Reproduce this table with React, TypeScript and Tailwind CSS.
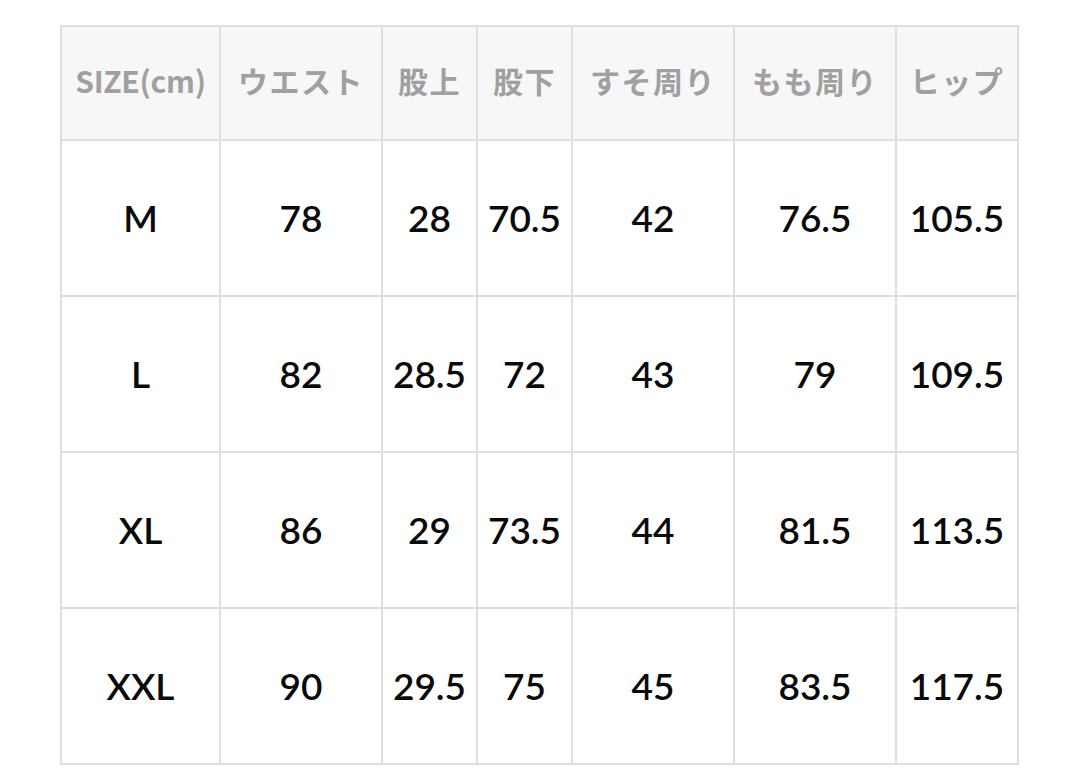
const headers = ["SIZE(cm)", "ウエスト", "股上", "股下", "すそ周り", "もも周り", "ヒップ"];

const rows = [
  ["M", "78", "28", "70.5", "42", "76.5", "105.5"],
  ["L", "82", "28.5", "72", "43", "79", "109.5"],
  ["XL", "86", "29", "73.5", "44", "81.5", "113.5"],
  ["XXL", "90", "29.5", "75", "45", "83.5", "117.5"],
];

const widths = ["w-[159px]", "w-[162px]", "w-[95px]", "w-[95px]", "w-[162px]", "w-[162px]", "w-[122px]"];

export default function App() {
  return (
    <div className="w-[1080px] h-[782px] bg-white pt-[25px] pl-[60px] overflow-hidden">
      <table className="table-fixed border-collapse w-[959px]">
        <colgroup>
          {widths.map((w, i) => (
            <col key={i} className={w} />
          ))}
        </colgroup>
        <thead>
          <tr className="h-[114px] bg-[#f7f7f7]">
            {headers.map((h, i) => (
              <th
                key={h}
                className={
                  "border-2 border-[#dedede] p-0 pb-[5px] text-center align-middle whitespace-nowrap text-[30px] font-bold text-[#a0a0a0] " +
                  (i === 0 ? "tracking-[-0.01em]" : "tracking-[0.05em]")
                }
                style={{ fontFamily: '"Noto Sans CJK JP", "Noto Sans", sans-serif' }}
              >
                {h}
              </th>
            ))}
          </tr>
        </thead>
        <tbody>
          {rows.map((r) => (
            <tr key={r[0]} className="h-[156px]">
              {r.map((c, i) => (
                <td
                  key={i}
                  className="border-2 border-[#dedede] p-0 text-center align-middle whitespace-nowrap text-[37px] font-semibold text-[#0a0a0a]"
                  style={{ fontFamily: 'Lato, "Liberation Sans", sans-serif' }}
                >
                  {c}
                </td>
              ))}
            </tr>
          ))}
        </tbody>
      </table>
    </div>
  );
}
